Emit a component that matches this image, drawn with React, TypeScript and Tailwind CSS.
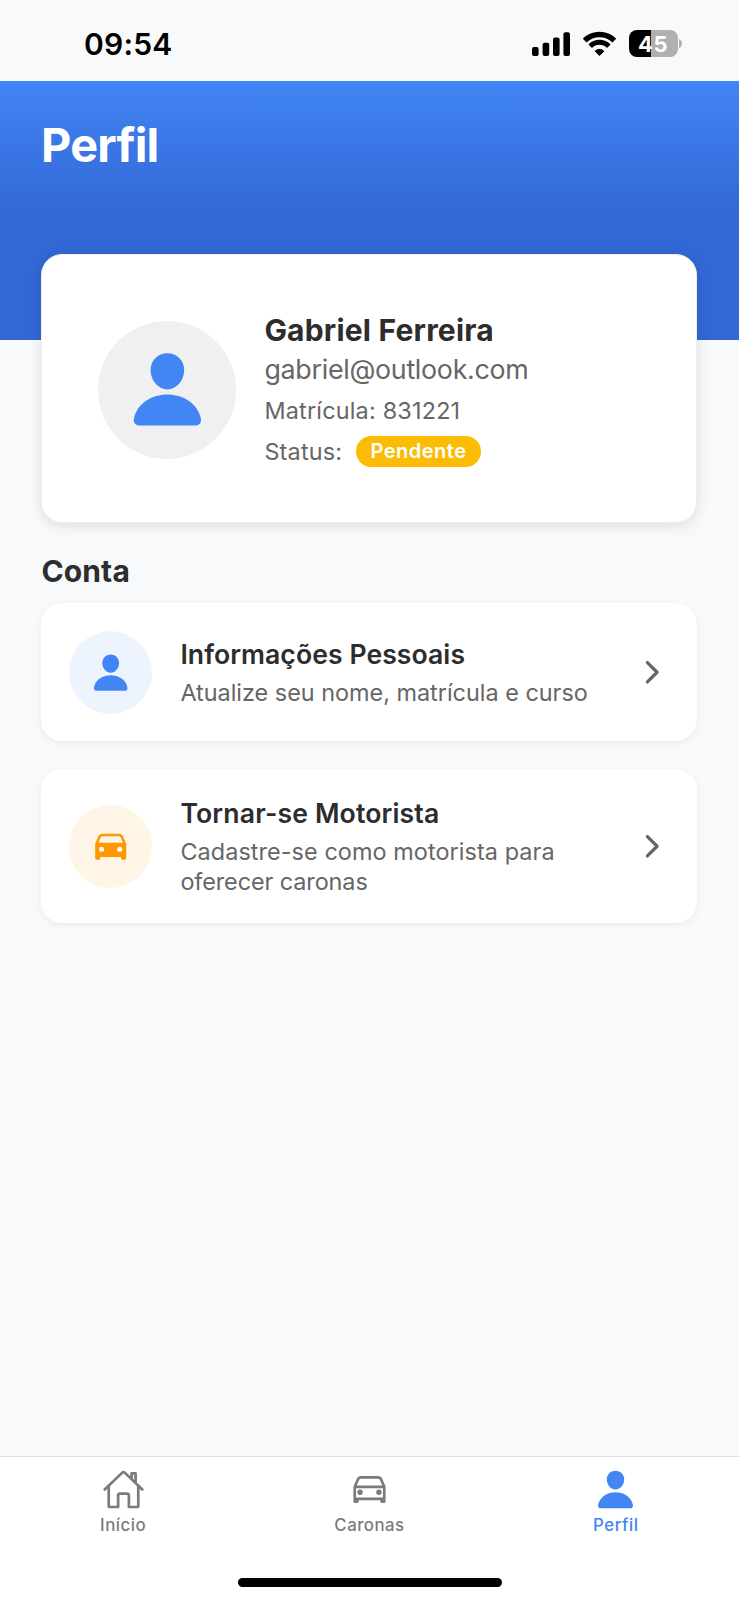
import type { ReactNode } from "react";
import {
  IoPerson,
  IoCar,
  IoCarOutline,
  IoHomeOutline,
  IoChevronForward,
} from "react-icons/io5";

function SignalIcon() {
  return (
    <svg width="38" height="24" viewBox="0 0 38 24" fill="#000">
      <rect x="0" y="15" width="6.6" height="9" rx="2" />
      <rect x="10.6" y="10.8" width="6.6" height="13.2" rx="2" />
      <rect x="21" y="5.6" width="6.6" height="18.4" rx="2" />
      <rect x="31.4" y="0.2" width="6.6" height="23.8" rx="2" />
    </svg>
  );
}

function WifiIcon() {
  return (
    <svg width="35" height="26" viewBox="0 0 35 26" fill="none" stroke="#000">
      <path d="M2.7 9.7A20.9 20.9 0 0 1 32.3 9.7" strokeWidth="5.4" />
      <path d="M8.2 15.2A13.1 13.1 0 0 1 26.8 15.2" strokeWidth="5" />
      <path
        d="M17.5 24.6L13.1 20.2A6.2 6.2 0 0 1 21.9 20.2Z"
        fill="#000"
        strokeWidth="1"
        strokeLinejoin="round"
      />
    </svg>
  );
}

function Battery() {
  return (
    <div className="flex items-center gap-[1.5px]">
      <div className="flex h-[27px] w-[49px] items-center justify-center rounded-[8px] bg-[linear-gradient(to_right,#000_22px,#b0b0b0_22px)] text-[22px] leading-none font-bold tracking-[0.5px] text-white">
        45
      </div>
      <svg width="3" height="9" viewBox="0 0 3 9" fill="#b0b0b0">
        <path d="M0 0C1.9 .7 3 2.4 3 4.5S1.9 8.3 0 9Z" />
      </svg>
    </div>
  );
}

type RowProps = {
  icon: ReactNode;
  iconClass: string;
  title: ReactNode;
  children: ReactNode;
};

function MenuRow({ icon, iconClass, title, children }: RowProps) {
  return (
    <button className="flex items-center rounded-[21px] bg-white px-7 pt-[28.3px] pb-[26.5px] text-left shadow-[0_2px_7px_rgba(0,0,0,0.06)]">
      <span
        className={`flex size-[83px] shrink-0 items-center justify-center rounded-full text-[41.4px] ${iconClass}`}
      >
        {icon}
      </span>
      <span className="ml-[28px] flex flex-1 flex-col">
        <span className="text-[26.6px] leading-[33px] font-semibold text-[#2d2d2d]">{title}</span>
        <span className="mt-[7px] text-[23.4px] leading-[29.5px] text-[#666]">{children}</span>
      </span>
      <IoChevronForward className="-mt-[1px] shrink-0 text-[34.5px] text-[#666]" />
    </button>
  );
}

function Tab({ icon, label, className }: { icon: ReactNode; label: string; className: string }) {
  return (
    <div className={`flex flex-1 flex-col items-center ${className}`}>
      <span className="text-[43px]">{icon}</span>
      <span className="mt-[4.5px] text-[16.8px] leading-5 font-[450]">{label}</span>
    </div>
  );
}

export default function App() {
  return (
    <div className="flex h-[1600px] w-[739px] flex-col overflow-hidden bg-[#f8f9fb] font-['Inter','Liberation_Sans',sans-serif]">
      <div className="flex h-[81px] shrink-0 items-start justify-between pr-[57px] pl-[84px]">
        <div className="mt-[26px] text-[30px] leading-[37px] font-semibold tracking-[0.2px] text-black">
          09:54
        </div>
        <div className="mt-[30px] flex h-[27px] items-center">
          <SignalIcon />
          <div className="ml-3">
            <WifiIcon />
          </div>
          <div className="ml-3">
            <Battery />
          </div>
        </div>
      </div>

      <header className="h-[259px] shrink-0 bg-[linear-gradient(to_bottom,#4285f4_0px,#3367d6_133px)] pt-[35px] pl-[41px]">
        <h1 className="text-[46.8px] leading-[59px] font-bold tracking-[-0.79px] text-white">
          Perfil
        </h1>
      </header>

      <main className="-mt-[86px] flex flex-1 flex-col pr-[42px] pl-[41.4px]">
        <section className="flex h-[269px] items-center rounded-[21px] border border-[#f0f0f0] bg-white pt-[2px] pl-14 shadow-[0_3px_14px_rgba(0,0,0,0.11)]">
          <div className="flex size-[138px] shrink-0 items-center justify-center rounded-full bg-[#f0f0f0] text-[82.8px] text-[#4285f4]">
            <IoPerson />
          </div>
          <div className="ml-[28px] text-[#666]">
            <div className="text-[30px] leading-[37px] font-bold tracking-[0.2px] text-[#2d2d2d]">
              Gabriel Ferreira
            </div>
            <div className="mt-1 text-[26.8px] leading-[33px] tracking-[-0.28px]">
              gabriel@outlook.com
            </div>
            <div className="mt-2.5 text-[23.4px] leading-[30px] tracking-[0.2px]">
              Matrícula: 831221
            </div>
            <div className="mt-2.5 flex h-[31px] items-center text-[23.4px] leading-[31px] tracking-[0.2px]">
              Status:
              <span className="ml-[14px] flex h-[31px] w-[124.5px] items-center justify-center rounded-full bg-[#fbbc05] text-[20px] font-semibold tracking-[0.5px] text-white">
                Pendente
              </span>
            </div>
          </div>
        </section>

        <h2 className="mt-[29.5px] text-[30px] leading-[37px] font-bold tracking-[0.15px] text-[#2d2d2d]">
          Conta
        </h2>

        <div className="mt-[13.5px] flex flex-col gap-7">
          <MenuRow
            icon={<IoPerson />}
            iconClass="bg-[#edf4fe] text-[#4285f4]"
            title={<span className="tracking-[0.06px]">Informações Pessoais</span>}
          >
            Atualize seu nome, matrícula e curso
          </MenuRow>
          <MenuRow
            icon={<IoCar />}
            iconClass="bg-[#fff5e6] text-[#ff9800]"
            title={<span className="tracking-[0.15px]">Tornar-se Motorista</span>}
          >
            <span className="block tracking-[0.08px]">Cadastre-se como motorista para</span>
            <span className="block tracking-[-0.08px]">oferecer caronas</span>
          </MenuRow>
        </div>
      </main>

      <footer className="flex h-[144px] shrink-0 flex-col items-center border-t border-[#dfe0e2] bg-white pt-[10.5px]">
        <nav className="flex w-full">
          <Tab icon={<IoHomeOutline />} label="Início" className="tracking-[0.55px] text-[#7b7b7b]" />
          <Tab icon={<IoCarOutline />} label="Caronas" className="tracking-[0.5px] text-[#7b7b7b]" />
          <Tab icon={<IoPerson />} label="Perfil" className="tracking-[0.6px] text-[#4285f4]" />
        </nav>
        <div className="mt-auto mb-[13.5px] h-[9px] w-[264px] rounded-full bg-black" />
      </footer>
    </div>
  );
}
